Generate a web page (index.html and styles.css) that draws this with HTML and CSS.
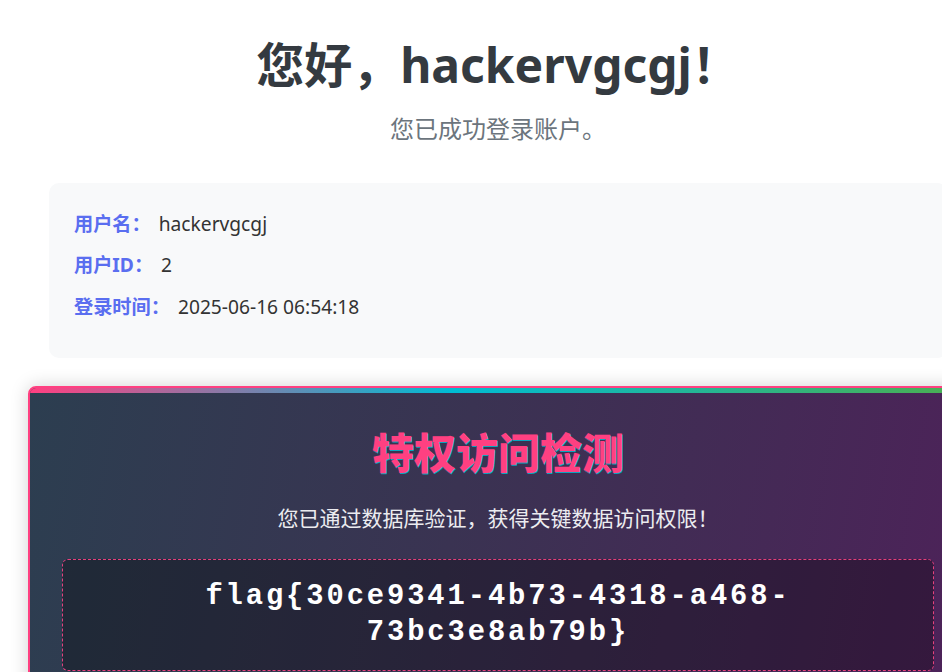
FILE: index.html
```html
<!DOCTYPE html>
<html lang="zh-CN">
<head>
<meta charset="utf-8">
<title>欢迎</title>
<link rel="stylesheet" href="styles.css">
</head>
<body>
<div class="page">
  <div class="container">
    <h1 class="title">您好，hackervgcgj！</h1>
    <p class="subtitle">您已成功登录账户。</p>

    <div class="info-box">
      <div class="info-row"><span class="label">用户名：</span><span class="value">hackervgcgj</span></div>
      <div class="info-row"><span class="label">用户ID：</span><span class="value">2</span></div>
      <div class="info-row"><span class="label">登录时间：</span><span class="value">2025-06-16 06:54:18</span></div>
    </div>

    <div class="privilege">
      <h2 class="priv-title">特权访问检测</h2>
      <p class="priv-text">您已通过数据库验证，获得关键数据访问权限！</p>
      <div class="flag-box">
        <div class="flag">flag{30ce9341-4b73-4318-a468-73bc3e8ab79b}</div>
      </div>
    </div>
  </div>
</div>
</body>
</html>
```

FILE: styles.css
```css
html {
  overflow: hidden;
}

body {
  margin: 0;
  background: #ffffff;
  font-family: "Noto Sans", "Noto Sans CJK SC", sans-serif;
  color: #333333;
}

.page {
  padding: 36px 0 40px 49px;
}

.container {
  width: 898px;
}

.title {
  margin: 0;
  font-size: 48px;
  line-height: 57.6px;
  font-weight: 700;
  color: #343a40;
  text-align: center;
}

.subtitle {
  margin: 17px 0 0;
  font-size: 24px;
  line-height: 36px;
  color: #6c757d;
  text-align: center;
}

.info-box {
  margin-top: 36px;
  background: #f8f9fa;
  border-radius: 10px;
  padding: 25px 25px 26px;
}

.info-row {
  display: flex;
  align-items: baseline;
  font-size: 19.2px;
  line-height: 32px;
  margin-bottom: 9.6px;
}

.label {
  font-weight: 700;
  color: #5a6ef0;
  margin-right: 8px;
}

.value {
  color: #333333;
}

.privilege {
  position: relative;
  margin: 28px -21px 0;
  border: 2px solid #ff4081;
  border-radius: 8px;
  padding: 40px 32px 30px;
  background: linear-gradient(100deg, #2c3e50 0%, #3a3352 45%, #4d2259 100%);
  box-shadow: 0 0 18px rgba(0, 0, 0, 0.18);
  text-align: center;
  overflow: hidden;
}

.privilege::before {
  content: "";
  position: absolute;
  top: 0;
  left: 0;
  right: 0;
  height: 5px;
  background: linear-gradient(90deg, #ff4081 0%, #00bcd4 45%, #4caf50 100%);
}

.priv-title {
  margin: 0;
  font-size: 42px;
  line-height: 50px;
  font-weight: 900;
  color: #ff4081;
  text-shadow: 1px 1px 0 rgba(0, 188, 212, 0.85);
}

.priv-text {
  margin: 24px 0 0;
  font-size: 21px;
  line-height: 33.6px;
  color: #ececf0;
}

.flag-box {
  margin-top: 23px;
  border: 1px dashed #e6407e;
  border-radius: 6px;
  background: rgba(0, 0, 0, 0.3);
  padding: 19px 24px;
}

.flag {
  font-family: "Liberation Mono", "Courier New", monospace;
  font-weight: 700;
  font-size: 28.8px;
  line-height: 36px;
  letter-spacing: 2.9px;
  color: #ffffff;
}
```
